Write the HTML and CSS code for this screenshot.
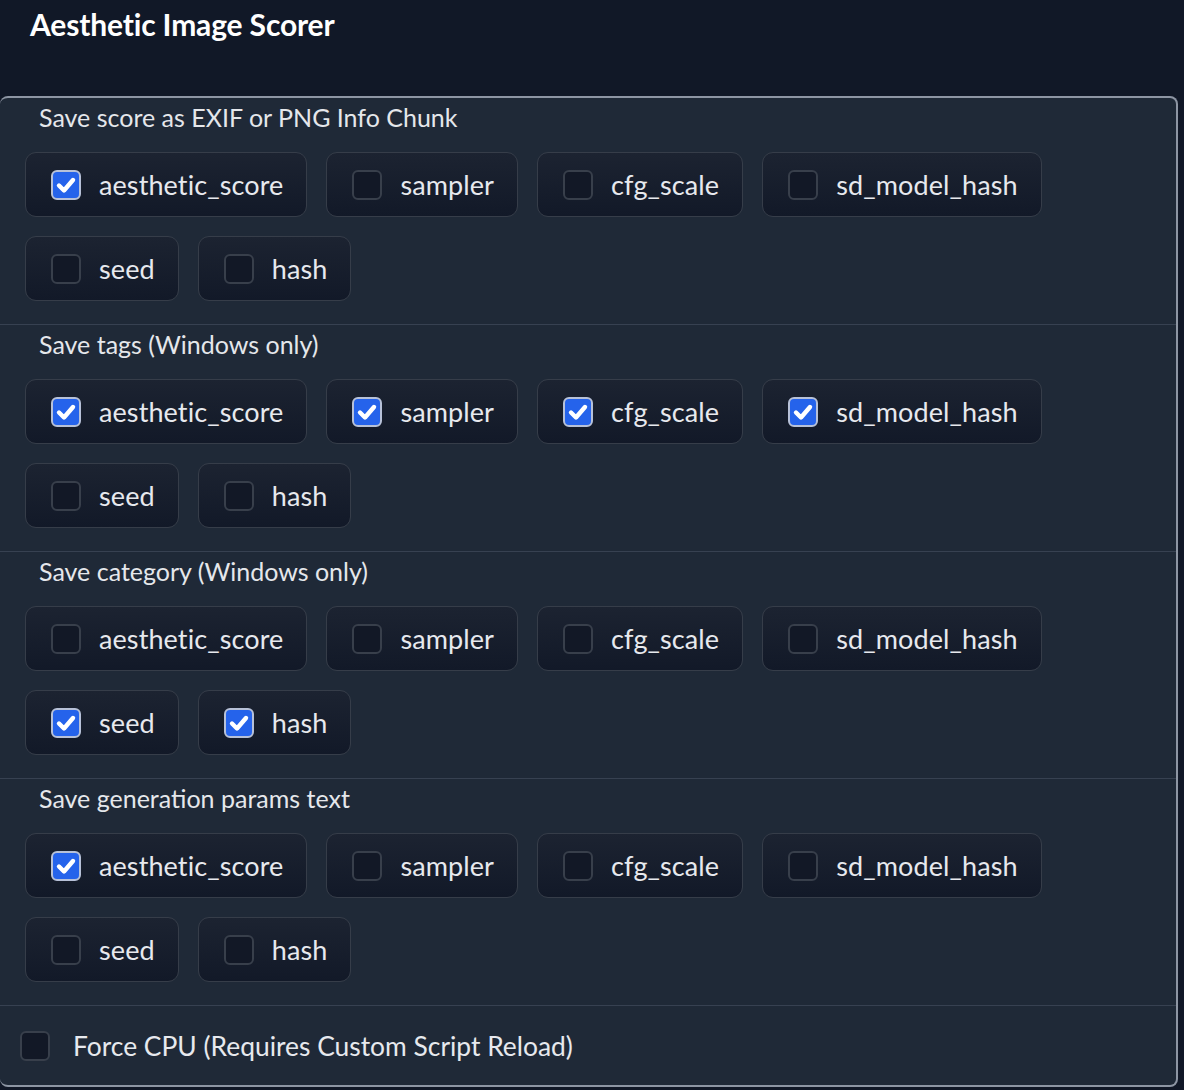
FILE: index.html
```html
<!DOCTYPE html>
<html lang="en">
<head>
<meta charset="utf-8">
<title>Aesthetic Image Scorer</title>
<link rel="stylesheet" href="styles.css">
</head>
<body>
<header class="header">
  <h1 class="app-title">Aesthetic Image Scorer</h1>
</header>
<main class="panel">
  <section class="group">
    <div class="group-title">Save score as EXIF or PNG Info Chunk</div>
    <div class="chips">
      <label class="chip"><span class="box checked"><svg viewBox="0 0 30 30"><polyline points="8,15.5 13,20.5 22,10"/></svg></span><span class="chip-text">aesthetic_score</span></label>
      <label class="chip"><span class="box"></span><span class="chip-text">sampler</span></label>
      <label class="chip"><span class="box"></span><span class="chip-text">cfg_scale</span></label>
      <label class="chip"><span class="box"></span><span class="chip-text">sd_model_hash</span></label>
      <label class="chip"><span class="box"></span><span class="chip-text">seed</span></label>
      <label class="chip"><span class="box"></span><span class="chip-text">hash</span></label>
    </div>
  </section>
  <section class="group">
    <div class="group-title">Save tags (Windows only)</div>
    <div class="chips">
      <label class="chip"><span class="box checked"><svg viewBox="0 0 30 30"><polyline points="8,15.5 13,20.5 22,10"/></svg></span><span class="chip-text">aesthetic_score</span></label>
      <label class="chip"><span class="box checked"><svg viewBox="0 0 30 30"><polyline points="8,15.5 13,20.5 22,10"/></svg></span><span class="chip-text">sampler</span></label>
      <label class="chip"><span class="box checked"><svg viewBox="0 0 30 30"><polyline points="8,15.5 13,20.5 22,10"/></svg></span><span class="chip-text">cfg_scale</span></label>
      <label class="chip"><span class="box checked"><svg viewBox="0 0 30 30"><polyline points="8,15.5 13,20.5 22,10"/></svg></span><span class="chip-text">sd_model_hash</span></label>
      <label class="chip"><span class="box"></span><span class="chip-text">seed</span></label>
      <label class="chip"><span class="box"></span><span class="chip-text">hash</span></label>
    </div>
  </section>
  <section class="group">
    <div class="group-title">Save category (Windows only)</div>
    <div class="chips">
      <label class="chip"><span class="box"></span><span class="chip-text">aesthetic_score</span></label>
      <label class="chip"><span class="box"></span><span class="chip-text">sampler</span></label>
      <label class="chip"><span class="box"></span><span class="chip-text">cfg_scale</span></label>
      <label class="chip"><span class="box"></span><span class="chip-text">sd_model_hash</span></label>
      <label class="chip"><span class="box checked"><svg viewBox="0 0 30 30"><polyline points="8,15.5 13,20.5 22,10"/></svg></span><span class="chip-text">seed</span></label>
      <label class="chip"><span class="box checked"><svg viewBox="0 0 30 30"><polyline points="8,15.5 13,20.5 22,10"/></svg></span><span class="chip-text">hash</span></label>
    </div>
  </section>
  <section class="group">
    <div class="group-title">Save generation params text</div>
    <div class="chips">
      <label class="chip"><span class="box checked"><svg viewBox="0 0 30 30"><polyline points="8,15.5 13,20.5 22,10"/></svg></span><span class="chip-text">aesthetic_score</span></label>
      <label class="chip"><span class="box"></span><span class="chip-text">sampler</span></label>
      <label class="chip"><span class="box"></span><span class="chip-text">cfg_scale</span></label>
      <label class="chip"><span class="box"></span><span class="chip-text">sd_model_hash</span></label>
      <label class="chip"><span class="box"></span><span class="chip-text">seed</span></label>
      <label class="chip"><span class="box"></span><span class="chip-text">hash</span></label>
    </div>
  </section>
  <section class="group group-last">
    <label class="single"><span class="box"></span><span class="single-text">Force CPU (Requires Custom Script Reload)</span></label>
  </section>
</main>
</body>
</html>
```

FILE: styles.css
```css
html, body {
  margin: 0;
  padding: 0;
}

body {
  background: #111827;
  color: #e5e7eb;
  font-family: Lato, "Noto Sans", sans-serif;
  overflow: hidden;
}

.header {
  height: 96px;
  padding-left: 30px;
  box-sizing: border-box;
}

.app-title {
  margin: 0;
  font-size: 30px;
  font-weight: 700;
  line-height: 48px;
  color: #ffffff;
  letter-spacing: -0.15px;
}

.panel {
  width: 1178px;
  box-sizing: border-box;
  background: #1f2937;
  border: 2px solid #8d95a3;
  border-left-width: 0;
  border-radius: 8px;
  overflow: hidden;
}

.group {
  padding: 4px 24px 23px 25px;
  border-bottom: 1px solid #374151;
}

.group-last {
  border-bottom: none;
  padding: 25px 20px 24px 20px;
}

.group-title {
  font-size: 25px;
  line-height: 30px;
  padding-left: 14px;
  margin-bottom: 20px;
  color: #e5e7eb;
}

.chips {
  display: flex;
  flex-wrap: wrap;
  gap: 19px;
}

.chip {
  display: inline-flex;
  align-items: center;
  gap: 18px;
  height: 65px;
  box-sizing: border-box;
  padding: 0 23px 0 25px;
  border: 1.5px solid #363d49;
  border-radius: 11px;
  background: linear-gradient(to bottom, #1c2331, #121928);
}

.chip-text,
.single-text {
  font-size: 27px;
  line-height: 30px;
  color: #e7e9ee;
  letter-spacing: 0.1px;
}

.single-text {
  font-size: 26.4px;
  letter-spacing: 0;
}

.box {
  flex: none;
  width: 30px;
  height: 30px;
  box-sizing: border-box;
  border: 2px solid #383f4b;
  border-radius: 6px;
  background: #121826;
  display: flex;
  align-items: center;
  justify-content: center;
}

.box.checked {
  background: #2563eb;
  border-color: #b7c1d8;
}

.box svg {
  width: 30px;
  height: 30px;
  flex: none;
}

.box svg polyline {
  fill: none;
  stroke: #ffffff;
  stroke-width: 4.4;
  stroke-linecap: round;
  stroke-linejoin: round;
}

.single {
  display: flex;
  align-items: center;
  gap: 23px;
  height: 30px;
}
```
